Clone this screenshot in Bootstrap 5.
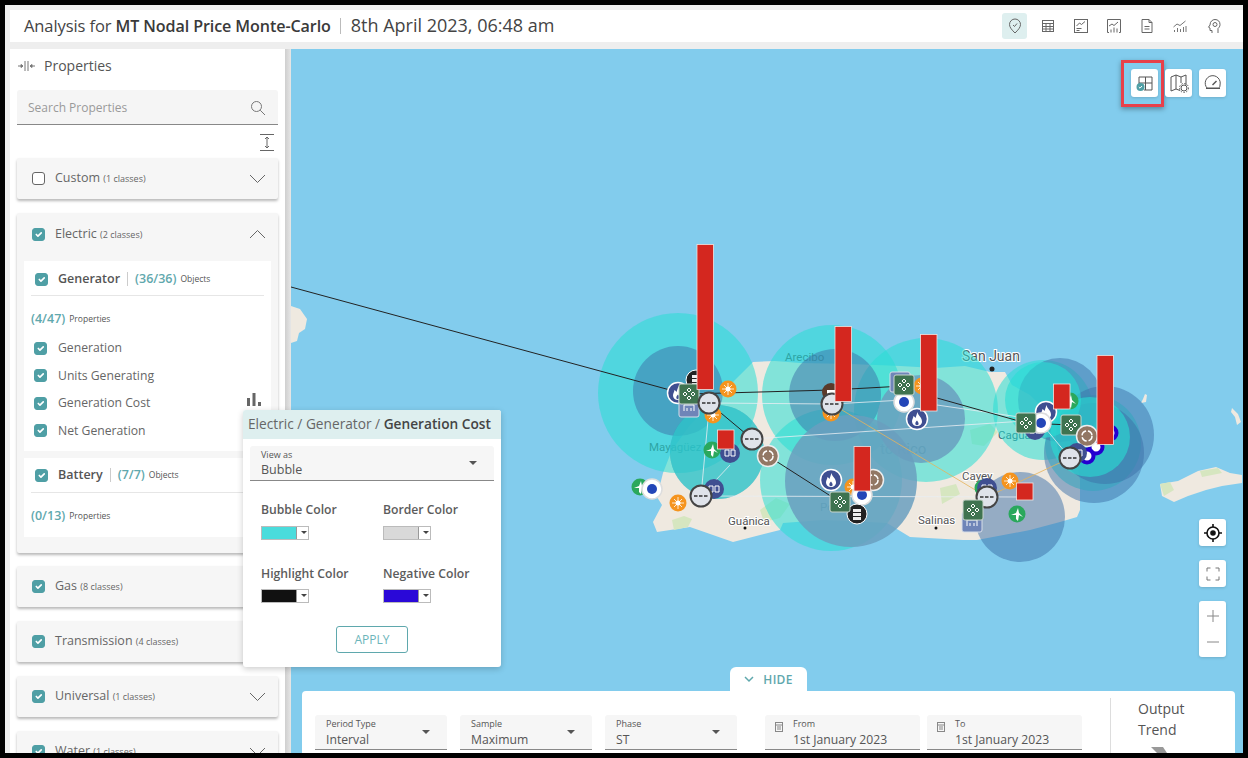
<!DOCTYPE html>
<html lang="en">
<head>
    <meta charset="UTF-8">
    <meta name="viewport" content="width=device-width, initial-scale=1">
    <title>Analysis</title>
    <link rel="stylesheet" href="https://cdn.jsdelivr.net/npm/bootstrap@5.3.0/dist/css/bootstrap.min.css">
    <style>
        html, body { height: 100%; overflow: hidden; }
        body { background: #000; padding: 5px; font-family: "Open Sans", "Liberation Sans", sans-serif; color: #555; }
        .app-frame { width: 1238px; height: 748px; background: #eee; padding: 5px 0 0 5px; overflow: hidden; position: relative; }
        .top-bar { height: 32px; background: #fff; padding: 0 17px 0 14px; margin-bottom: 7px; }
        .top-title { font-size: 16.5px; color: #444; letter-spacing: -.1px; }
        .top-title b { font-weight: 600; color: #3a3a3a; font-size: 16.1px; }
        .top-date { font-size: 18px; letter-spacing: 0; margin-top: -1px; }
        .top-sep { width: 1px; height: 16px; background: #bbb; margin: 0 10px 0 9px; }
        .top-icon { width: 25px; height: 26px; margin-left: 8px; border-radius: 3px; display: flex; align-items: center; justify-content: center; }
        .top-icon.on { background: #deefef; }
        .top-icon.last-one { margin-left: 9px; }
        .work-area { height: 704px; }
        .side-panel { width: 275px; height: 704px; background: #fff; padding: 0 7px; overflow: hidden; flex: none; }
        .side-gutter { width: 6px; flex: none; background: linear-gradient(90deg, #cfcfcf, #e6e6e6); }
        .side-head { height: 41px; padding-top: 7px; font-size: 14px; color: #555; align-items: flex-start; line-height: 20px; }
        .side-head svg { margin-top: 4px; }
        .search-box { height: 35px; background: #f5f5f5; border-bottom: 1px solid #888; border-radius: 3px 3px 0 0; padding: 1px 12px 0 11px; font-size: 12px; color: #9a9a9a; }
        .expand-row { height: 33px; padding: 8px 4px 0 0; }
        .group-card { background: #f6f6f6; border-radius: 2px; box-shadow: 0 2px 3px rgba(0,0,0,.28); margin-bottom: 14px; }
        .group-card.open-one { margin-bottom: 13px; }
        .group-head { height: 41px; padding: 0 12px 0 15px; font-size: 12.5px; color: #666; }
        .group-head.open-head { height: 48px; padding-bottom: 6px; }
        .group-head small { font-size: 9px; color: #666; }
        .count-note { font-size: 8.5px; font-weight: 400; color: #555; margin-left: 4px; }
        .form-check-input.tick { width: 13px; height: 13px; margin: 0 10px 0 0; border-radius: 3px; border-color: #666; flex: none; }
        .form-check-input.tick:checked { background-color: #4f9fa5; border-color: #4f9fa5; }
        .object-box { background: #fff; margin: 0 7px 7px; padding: 0 7px; }
        .object-head { height: 35px; border-bottom: 1px solid #e6e6e6; padding-left: 4px; font-size: 12.5px; font-weight: 600; color: #555; }
        .object-head.first-head { padding-top: 2px; }
        .object-head i { width: 1px; height: 14px; background: #ccc; margin: 0 7px; }
        .teal-num { color: #5fa8ad; font-weight: 600; font-size: 12.5px; }
        .prop-count { height: 38.5px; padding-top: 9px; }
        .prop-count.end-count { height: 44px; padding-top: 2px; }
        .prop-row { height: 27.5px; padding-left: 3px; font-size: 12.2px; color: #666; }
        .prop-row .tick { margin-right: 11px; }
        .row-tail { height: 6.5px; }
        .chart-mini { margin: 0 3px 7px auto; }
        .pop-card { position: absolute; left: 238px; top: 405px; width: 258px; height: 257px; background: #fff; border-radius: 3px; box-shadow: 0 2px 6px rgba(0,0,0,.2); z-index: 5; }
        .pop-title { height: 29px; background: #deefef; padding-left: 5px; font-size: 13.7px; color: #666; border-radius: 3px 3px 0 0; white-space: nowrap; }
        .pop-title b { font-weight: 600; color: #444; }
        .pick-field { background: #f6f6f6; border-bottom: 1px solid #888; border-radius: 3px 3px 0 0; position: relative; padding: 2px 0 0 11px; color: #555; font-size: 12.5px; line-height: 17px; }
        .pick-field label { display: block; font-size: 9px; line-height: 13px; color: #555; }
        .pick-field::after { content: ""; position: absolute; right: 17px; top: 15px; border: 4px solid transparent; border-top: 4.5px solid #555; border-bottom: 0; }
        .pick-field.no-caret::after { display: none; }
        .view-field { margin: 7px 7px 0; height: 35px; }
        .colour-grid { padding: 22px 11px 0 18px; display: grid; grid-template-columns: 122px 1fr; row-gap: 27px; }
        .colour-grid h6 { font-size: 12.2px; font-weight: 600; color: #5c5c5c; margin: 0 0 8px; }
        .swatch-pick { display: flex; width: 48px; height: 14px; border: 1px solid #bbb; }
        .swatch-pick span { width: 34px; }
        .swatch-pick em { flex: 1; background: #fff; position: relative; border-left: 1px solid #999; }
        .swatch-pick em::after { content: ""; position: absolute; left: 3.5px; top: 4px; border: 3px solid transparent; border-top: 3px solid #444; border-bottom: 0; }
        .apply-btn { display: block; width: 72px; height: 27px; margin: 23px auto 0; padding: 0; font-size: 12px; color: #6cb5ba; border: 1px solid #5fa8ad; border-radius: 3px; background: #fff; }
        .map-area { position: relative; overflow: hidden; width: 952px; height: 704px; background: #82cced; }
        .map-area > svg { position: absolute; left: 0; top: 0; }
        .map-btn { position: absolute; width: 27px; background: #fff; border-radius: 3px; display: flex; align-items: center; justify-content: center; box-shadow: 0 1px 3px rgba(0,0,0,.15); }
        .red-mark { position: absolute; left: 830px; top: 11px; width: 43px; height: 47px; border: 3px solid #e8404a; box-shadow: 0 2px 5px rgba(0,0,0,.35); }
        .hide-tab { position: absolute; left: 439px; top: 618px; width: 77px; height: 25px; background: #fff; border-radius: 6px 6px 0 0; font-size: 12px; font-weight: 600; color: #5fa8ad; letter-spacing: .3px; gap: 9px; }
        .filter-panel { position: absolute; left: 11px; top: 642px; width: 933px; height: 80px; background: #fff; border-radius: 4px; padding: 24px 0 0 13px; }
        .filter-panel .pick-field { height: 35px; flex: none; font-size: 12.2px; }
        .filter-panel .pick-field label { margin-bottom: 1px; }
        .filter-sep { position: absolute; left: 808px; top: 7px; width: 1px; height: 60px; background: #ddd; }
        .trend-label { position: absolute; left: 836px; top: 7px; font-size: 14px; line-height: 21px; color: #555; }
        .trend-glyph { position: absolute; left: 849px; top: 56px; }
        .date-field { padding-left: 28px; }
        .date-field svg { position: absolute; left: 10px; top: 6px; }
        .map-label { font-family: Roboto, "Liberation Sans", sans-serif; fill: #555; stroke: #fff; stroke-width: 2px; paint-order: stroke; font-size: 11.5px; }
        .map-label.under { fill: #33606c; stroke: none; }
    </style>
</head>
<body>
<div class="app-frame">
    <!-- Title bar -->
    <div class="top-bar d-flex align-items-center">
        <span class="top-title">Analysis for <b>MT Nodal Price Monte-Carlo</b></span>
        <span class="top-sep"></span>
        <span class="top-title top-date">8th April 2023, 06:48 am</span>
        <div class="ms-auto d-flex align-items-center">
            <span class="top-icon on"><svg width="16" height="16" viewBox="0 0 16 16" fill="none" stroke="#666"><path d="M8 15C5 12 2.500 9.500 2.500 6.500a5.500 5.500 0 0 1 11 0C13.500 9.500 11 12 8 15z"/><path d="M6 7l1.500 1.500L10 5.500"/></svg></span>
            <span class="top-icon"><svg width="16" height="16" viewBox="0 0 16 16" fill="none" stroke="#666"><rect x="2.500" y="2.500" width="11" height="11"/><path d="M2.500 5.500h11M2.500 8.500h11M2.500 11h11M6 5.500v8M10 5.500v8"/></svg></span>
            <span class="top-icon"><svg width="16" height="16" viewBox="0 0 16 16" fill="none" stroke="#666"><rect x="1.500" y="1.500" width="13" height="13"/><path d="M3.500 8l3-3 2 1.500 3.500-3M3.500 10.500h5M3.500 12.500h3"/></svg></span>
            <span class="top-icon"><svg width="16" height="16" viewBox="0 0 16 16" fill="none" stroke="#666"><path d="M3 14.500H1.500v-13h13v13H13M3 8l3-2 2 1.500 4-3.500"/><path d="M5 14.500v-3M8 14.500v-5M11 14.500v-4"/></svg></span>
            <span class="top-icon"><svg width="16" height="16" viewBox="0 0 16 16" fill="none" stroke="#666"><path d="M3 1.500h7l3 3v10H3zM10 1.500v3h3M5.500 8.500h5M5.500 11h5"/></svg></span>
            <span class="top-icon"><svg width="16" height="16" viewBox="0 0 16 16" fill="none" stroke="#777"><path d="M1.500 9L5 6l3 1.500L13.500 3"/><path d="M2.500 14v-2M5.500 14v-4M8.500 14v-3M11.500 14V9M14 14V8"/></svg></span>
            <span class="top-icon last-one"><svg width="16" height="16" viewBox="0 0 16 16" fill="none" stroke="#666"><path d="M6 15v-2.500H4V10L2.500 9.200 4 7C4 3.500 6.500 1.500 9 1.500c3 0 5 2 5 5 0 2-1 3-2 4V15"/><circle cx="9" cy="6.500" r="2"/></svg></span>
        </div>
    </div>

    <div class="work-area d-flex">
        <!-- Properties -->
        <div class="side-panel">
            <div class="side-head d-flex gap-2">
                <svg width="19" height="12" viewBox="0 0 19 12" fill="none" stroke="#777" stroke-width="1"><path d="M8 1v10M11 1v10M1 6h4M18 6h-4"/><path d="M4 4.500L6 6 4 7.500zM15 4.500L13 6l2 1.500z" fill="#777"/></svg>
                <span>Properties</span>
            </div>
            <div class="search-box d-flex align-items-center justify-content-between">
                <span>Search Properties</span>
                <svg width="16" height="16" viewBox="0 0 16 16" fill="none" stroke="#777"><circle cx="6.500" cy="6.500" r="5"/><path d="M10.200 10.200L15 15"/></svg>
            </div>
            <div class="expand-row d-flex justify-content-end">
                <svg width="14" height="19" viewBox="0 0 14 19" fill="none" stroke="#666"><path d="M0 1.500h14M0 17.500h14M7 4v11M5 6l2-2 2 2M5 13l2 2 2-2"/></svg>
            </div>

            <div class="group-card">
                <div class="group-head d-flex align-items-center">
                    <input class="form-check-input tick" type="checkbox">
                    <span>Custom <small>(1 classes)</small></span>
                    <svg class="ms-auto" width="17" height="10" viewBox="0 0 17 10" fill="none" stroke="#666"><path d="M1 1l7.500 7.500L16 1"/></svg>
                </div>
            </div>

            <div class="group-card open-one pb-1">
                <div class="group-head open-head d-flex align-items-center">
                    <input class="form-check-input tick" type="checkbox" checked>
                    <span>Electric <small>(2 classes)</small></span>
                    <svg class="ms-auto" width="17" height="10" viewBox="0 0 17 10" fill="none" stroke="#666"><path d="M1 9l7.500-7.500L16 9"/></svg>
                </div>
                <div class="object-box">
                    <div class="object-head first-head d-flex align-items-center">
                        <input class="form-check-input tick" type="checkbox" checked>
                        <span>Generator</span><i></i><span class="teal-num">(36/36)</span><span class="count-note">Objects</span>
                    </div>
                    <div class="prop-count d-flex align-items-center"><span class="teal-num">(4/47)</span><span class="count-note">Properties</span></div>
                    <div class="prop-row d-flex align-items-center"><input class="form-check-input tick" type="checkbox" checked><span>Generation</span></div>
                    <div class="prop-row d-flex align-items-center"><input class="form-check-input tick" type="checkbox" checked><span>Units Generating</span></div>
                    <div class="prop-row d-flex align-items-center"><input class="form-check-input tick" type="checkbox" checked><span>Generation Cost</span>
                        <svg class="chart-mini" width="14" height="13" viewBox="0 0 14 13" fill="#666"><rect x="0" y="5" width="3" height="8"/><rect x="5.500" y="0" width="3" height="13"/><rect x="11" y="9" width="3" height="4"/></svg>
                    </div>
                    <div class="prop-row d-flex align-items-center"><input class="form-check-input tick" type="checkbox" checked><span>Net Generation</span></div>
                    <div class="row-tail"></div>
                </div>
                <div class="object-box mb-0 pb-0">
                    <div class="object-head d-flex align-items-center">
                        <input class="form-check-input tick" type="checkbox" checked>
                        <span>Battery</span><i></i><span class="teal-num">(7/7)</span><span class="count-note">Objects</span>
                    </div>
                    <div class="prop-count end-count d-flex align-items-center"><span class="teal-num">(0/13)</span><span class="count-note">Properties</span></div>
                </div>
                <div class="pt-2 pb-1"></div>
            </div>

            <div class="group-card">
                <div class="group-head d-flex align-items-center"><input class="form-check-input tick" type="checkbox" checked><span>Gas <small>(8 classes)</small></span></div>
            </div>
            <div class="group-card">
                <div class="group-head d-flex align-items-center"><input class="form-check-input tick" type="checkbox" checked><span>Transmission <small>(4 classes)</small></span></div>
            </div>
            <div class="group-card">
                <div class="group-head d-flex align-items-center">
                    <input class="form-check-input tick" type="checkbox" checked>
                    <span>Universal <small>(1 classes)</small></span>
                    <svg class="ms-auto" width="17" height="10" viewBox="0 0 17 10" fill="none" stroke="#666"><path d="M1 1l7.500 7.500L16 1"/></svg>
                </div>
            </div>
            <div class="group-card">
                <div class="group-head d-flex align-items-center">
                    <input class="form-check-input tick" type="checkbox" checked>
                    <span>Water <small>(1 classes)</small></span>
                    <svg class="ms-auto" width="17" height="10" viewBox="0 0 17 10" fill="none" stroke="#666"><path d="M1 1l7.500 7.500L16 1"/></svg>
                </div>
            </div>
        </div>
        <div class="side-gutter"></div>

        <!-- Map -->
        <div class="map-area">
            <svg width="952" height="704" viewBox="291 49 952 704">
                <defs>
                    <g id="m-grid"><rect x="-10" y="-10" width="20" height="20" rx="2" fill="#3f7350" stroke="#c9d6cc"/><path d="M0-6l2 2-2 2-2-2zM0 2l2 2-2 2-2-2zM-6 0l2-2 2 2-2 2zM2 0l2-2 2 2-2 2z" fill="none" stroke="#fff"/></g>
                    <g id="m-break"><circle r="10.500" fill="#dfe3ea" stroke="#444" stroke-width="2"/><path d="M-7 0h14" stroke="#333" stroke-width="1.500" stroke-dasharray="3.500 1.500"/></g>
                    <g id="m-sun"><circle r="8.500" fill="#f5941e"/><circle r="2.500" fill="#fff"/><path d="M0-6V6M-6 0H6M-4-4L4 4M-4 4L4-4" stroke="#fff" stroke-width=".8"/></g>
                    <g id="m-flame"><circle r="10.500" fill="#3f4f91" stroke="#fff" stroke-width="1.500"/><path d="M.5-7C1-3 5-2 5 2.500 5 5 3 7 0 7S-5 5-5 2.500C-5 .5-4-.5-3.500-3-2.500-2.500-2-1.500-1.500-1-1-3 0-5 .5-7zM0 1.500C-1.500 3-2 4-1.500 5.500-.5 6.500.5 6.500 1.500 5.500 2 4 1 3 0 1.500z" fill="#fff" fill-rule="evenodd"/></g>
                    <g id="m-plane"><circle r="8.500" fill="#2aa85c"/><path d="M1-6L-1-1-6 1-1 1-1 5 1 7 2 1 6 3 2-1z" fill="#fff"/></g>
                    <g id="m-dot"><circle r="10" fill="#fff" stroke="#ddd" stroke-width="1.500"/><circle r="5" fill="#2346b8"/></g>
                    <g id="m-store"><circle r="10" fill="#222" stroke="#fff"/><path d="M-4-5h8v3h-8zM-4-1h8v3h-8zM-4 3h8v3h-8z" fill="#eee"/></g>
                    <g id="m-recycle"><circle r="10.500" fill="#927764" stroke="#eee" stroke-width="1.500"/><circle r="5" fill="none" stroke="#fff" stroke-width="1.500" stroke-dasharray="6 2"/></g>
                    <g id="m-batt"><circle r="10" fill="#3f4f91"/><path d="M-5-3h4v6h-4zM1-3h4v6H1z" fill="none" stroke="#fff"/></g>
                    <g id="m-coal"><circle r="9" fill="#5a3a2a"/><path d="M-4-2h8v4h-8z" fill="#fff"/></g>
                    <g id="m-plant"><rect x="-10" y="-10" width="20" height="20" rx="2" fill="#6f85b8" stroke="#d8dee9"/><path d="M-5 4v-6h10v6M-2 4v-3M2 4v-3" stroke="#fff" fill="none"/></g>
                    <g id="m-neg"><circle r="6.500" fill="#fff" stroke="#2400d0" stroke-width="4"/></g>
                </defs>

                <!-- land -->
                <g fill="#efe9e0">
                    <path d="M291 306l9 3 7 10-2 10-6 4-2 8-6 2z"/>
                    <path d="M663 473L672 450 690 425 715 400 740 375 753 362 775 361 800 363 850 364 900 366 935 368 965 366 990 372 1005 372 1012 385 1030 395 1055 420 1075 450 1080 480 1080 510 1077 517 1060 522 1030 530 977 540 963 540 910 537 887 523 850 521 823 520 783 523 780 530 733 542 690 527 657 532 653 522 662 505 657 497z"/>
                    <path d="M1160 484l18-3 20-10 18-4 14 6 12 2v8l-20 3-16 4-18 6-14 6-12-6z"/>
                    <path d="M1143 399l2-5 2 1-1 7-5 1zM1232 408l6 6 3 8-4 3-2-8-4-5z"/>
                </g>
                <g fill="#d6e6c0">
                    <path d="M672 520l12-4 8 3-4 8-14 3zM1160 484l10-2 4 8-10 6zM1200 471l18-3 4 5-20 4zM970 430l20-6 8 8-14 14-12-2zM760 510l16-12 14 6-10 14-16 4zM940 488l16-4 4 10-18 10z"/>
                </g>
                <g fill="#555">
                    <circle cx="992" cy="369" r="2.500" fill="#222"/><circle cx="745" cy="528" r="1.500" fill="#111"/><circle cx="936" cy="528" r="1.500" fill="#111"/>
                </g>
                <text class="map-label" x="962" y="361" style="font-size:14px">San Juan</text>
                <text class="map-label" x="728" y="525">Guánica</text>
                <text class="map-label" x="918" y="524">Salinas</text>
                <text class="map-label" x="962" y="480">Cayey</text>
                <text class="map-label under" x="785" y="361">Arecibo</text>
                <text class="map-label under" x="649" y="451">Mayagüez</text>
                <text class="map-label under" x="880" y="454" style="font-size:15px">to Rico</text>
                <text class="map-label under" x="998" y="439">Caguas</text>
                <text class="map-label under" x="820" y="511">Ponce</text>

                <!-- bubbles -->
                <g fill="#28ded4" fill-opacity=".55">
                    <circle cx="678" cy="393" r="80"/><circle cx="832" cy="395" r="70"/><circle cx="831" cy="480" r="71"/>
                    <circle cx="926" cy="410" r="72"/><circle cx="1043" cy="410" r="50"/><circle cx="1093" cy="443" r="48"/>
                </g>
                <g fill="#3c6fa8" fill-opacity=".5">
                    <circle cx="678" cy="391" r="45"/><circle cx="717" cy="452" r="47"/><circle cx="835" cy="395" r="46"/>
                    <circle cx="1060" cy="400" r="42"/>
                    <circle cx="1094" cy="453" r="50"/><circle cx="1105" cy="435" r="49"/><circle cx="1020" cy="517" r="45"/>
                </g>
                <g fill="#6a9fbe" fill-opacity=".85">
                    <circle cx="851" cy="481" r="66"/><circle cx="921" cy="419" r="44"/>
                </g>
                <g fill="#28ded4" fill-opacity=".6">
                    <circle cx="717" cy="452" r="47"/><circle cx="1090" cy="437" r="40"/><circle cx="1043" cy="400" r="38"/>
                </g>

                <!-- network lines -->
                <g fill="none" stroke="#e8eef2" stroke-opacity=".8" stroke-width="1">
                    <path d="M709 403L832 404 904 400M752 439L1040 420M701 496L1020 497M708 420L701 496M730 465L701 496M1041 423L1070 458M937 405L1026 418"/>
                </g>
                <g fill="none" stroke="#e6b45a" stroke-width=".8">
                    <path d="M832 404L987 497 1070 458"/>
                </g>
                <g fill="none" stroke="#222" stroke-width="1">
                    <path d="M291 287L670 390M689 394L831 390 904 386M709 403L752 439M768 456L840 502M937 398L1026 423 1071 425"/>
                </g>

                <!-- markers -->
                <use href="#m-store" x="696" y="380"/><use href="#m-flame" x="678" y="393"/><use href="#m-plant" x="689" y="407"/>
                <use href="#m-grid" x="689" y="394"/><use href="#m-sun" x="728" y="389"/><use href="#m-sun" x="713" y="415"/>
                <use href="#m-break" x="709" y="403"/><use href="#m-batt" x="730" y="453"/><use href="#m-plane" x="712" y="450"/>
                <use href="#m-break" x="752" y="439"/><use href="#m-recycle" x="768" y="456"/><use href="#m-batt" x="714" y="489"/>
                <use href="#m-break" x="701" y="496"/><use href="#m-sun" x="678" y="503"/><use href="#m-plane" x="640" y="487"/>
                <use href="#m-dot" x="652" y="489"/>
                <use href="#m-coal" x="831" y="392"/><use href="#m-sun" x="831" y="413"/><use href="#m-break" x="832" y="404"/>
                <use href="#m-flame" x="831" y="480"/><use href="#m-sun" x="853" y="487"/><use href="#m-recycle" x="873" y="480"/>
                <use href="#m-dot" x="862" y="495"/><use href="#m-store" x="857" y="514"/><use href="#m-grid" x="840" y="502"/>
                <use href="#m-plant" x="900" y="382"/><use href="#m-sun" x="922" y="386"/><use href="#m-dot" x="904" y="402"/>
                <use href="#m-grid" x="904" y="385"/><use href="#m-flame" x="917" y="419"/>
                <use href="#m-plane" x="1070" y="401"/><use href="#m-flame" x="1046" y="412"/><use href="#m-batt" x="1035" y="430"/>
                <use href="#m-dot" x="1041" y="423"/><use href="#m-grid" x="1026" y="423"/><use href="#m-grid" x="1071" y="425"/>
                <use href="#m-neg" x="1110" y="433"/><use href="#m-neg" x="1096" y="447"/><use href="#m-neg" x="1087" y="456"/>
                <use href="#m-recycle" x="1087" y="436"/><use href="#m-batt" x="1077" y="453"/><use href="#m-break" x="1070" y="458"/>
                <use href="#m-sun" x="1010" y="481"/><use href="#m-plane" x="983" y="488"/><use href="#m-batt" x="987" y="488"/>
                <use href="#m-break" x="987" y="497"/><use href="#m-plant" x="972" y="522"/><use href="#m-grid" x="973" y="510"/>
                <use href="#m-plane" x="1017" y="514"/>

                <!-- bars -->
                <g fill="#d4271f" stroke="#f1e4e0" stroke-width=".8">
                    <rect x="697" y="244.500" width="16.500" height="145"/><rect x="835" y="326.500" width="16.500" height="75"/>
                    <rect x="920.500" y="334.500" width="16.500" height="76.500"/><rect x="854" y="446.500" width="16.500" height="44.500"/>
                    <rect x="717.500" y="430" width="16.500" height="19"/><rect x="1053.500" y="384" width="16.500" height="25"/>
                    <rect x="1097" y="355.500" width="16.500" height="89"/><rect x="1016.500" y="483" width="16.500" height="17"/>
                </g>
            </svg>

            <!-- Map tools -->
            <span class="red-mark"></span>
            <span class="map-btn" style="left:840px;top:20px;height:28px"><svg width="18" height="18" viewBox="0 0 18 18" fill="none" stroke="#555"><path d="M3 10V3h13v13H8M3 9h13M9.500 3v13"/><circle cx="4.500" cy="13" r="4" fill="#4f9fa5" stroke="none"/><path d="M2.800 13l1.200 1.200 2-2.200" stroke="#fff"/></svg></span>
            <span class="map-btn" style="left:874px;top:20px;height:28px"><svg width="20" height="20" viewBox="0 0 20 20" fill="none" stroke="#555"><path d="M2 4l5-2 5 2 5-2v10M12 4v6M7 2v14M2 4v14l5-2 4 1.500"/><circle cx="15" cy="15" r="3"/><circle cx="15" cy="15" r="4.500" stroke-dasharray="1.500 1.500"/></svg></span>
            <span class="map-btn" style="left:908px;top:20px;height:28px"><svg width="18" height="16" viewBox="0 0 18 16" fill="none" stroke="#555"><path d="M3 13A7.500 7.500 0 1 1 16 10c0 1.500-.3 2.300-1 3zM2 13.500h14"/><path d="M8.500 10l4-4" stroke-width="1.500"/></svg></span>
            <span class="map-btn" style="left:908px;top:470px;height:27px"><svg width="20" height="20" viewBox="0 0 20 20" fill="none" stroke="#111" stroke-width="1.600"><circle cx="10" cy="10" r="6"/><circle cx="10" cy="10" r="2" fill="#111"/><path d="M10 1v3M10 16v3M1 10h3M16 10h3"/></svg></span>
            <span class="map-btn" style="left:908px;top:511px;height:27px"><svg width="14" height="14" viewBox="0 0 14 14" fill="none" stroke="#777"><path d="M1 4.500V1h3.500M9.500 1H13v3.500M13 9.500V13H9.500M4.500 13H1V9.500"/></svg></span>
            <span class="map-btn flex-column" style="left:908px;top:552px;height:56px"><svg width="14" height="26" viewBox="0 0 14 26" fill="none" stroke="#888"><path d="M1 13h12M7 7v12"/></svg><svg width="14" height="26" viewBox="0 0 14 26" fill="none" stroke="#888"><path d="M1 13h12"/></svg></span>

            <div class="hide-tab d-flex align-items-center justify-content-center">
                <svg width="10" height="7" viewBox="0 0 10 7" fill="none" stroke="#5fa8ad" stroke-width="1.500"><path d="M1 1l4 4 4-4"/></svg><span>HIDE</span>
            </div>
            <div class="filter-panel d-flex">
                <div class="pick-field" style="width:132px;margin-right:13px"><label>Period Type</label>Interval</div>
                <div class="pick-field" style="width:132px;margin-right:13px"><label>Sample</label>Maximum</div>
                <div class="pick-field" style="width:132px;margin-right:28px"><label>Phase</label>ST</div>
                <div class="pick-field no-caret date-field" style="width:155px;margin-right:7px">
                    <svg width="8" height="11" viewBox="0 0 8 11" fill="none" stroke="#888"><rect x=".5" y="1.500" width="7" height="9"/><path d="M.5 4h7M2 6h4M2 8h4"/></svg>
                    <label>From</label>1st January 2023
                </div>
                <div class="pick-field no-caret date-field" style="width:155px">
                    <svg width="8" height="11" viewBox="0 0 8 11" fill="none" stroke="#888"><rect x=".5" y="1.500" width="7" height="9"/><path d="M.5 4h7M2 6h4M2 8h4"/></svg>
                    <label>To</label>1st January 2023
                </div>
                <span class="filter-sep"></span>
                <div class="trend-label">Output<br>Trend</div>
                <svg class="trend-glyph" width="16" height="6" viewBox="0 0 16 6" fill="#999"><path d="M0 0h12l4 6H6z"/></svg>
            </div>
        </div>
    </div>

    <!-- Colour settings popover -->
    <div class="pop-card">
        <div class="pop-title d-flex align-items-center"><span>Electric / Generator / <b>Generation Cost</b></span></div>
        <div class="pick-field view-field"><label>View as</label>Bubble</div>
        <div class="colour-grid">
            <div><h6>Bubble Color</h6><div class="swatch-pick"><span style="background:#4adcdc"></span><em></em></div></div>
            <div><h6>Border Color</h6><div class="swatch-pick"><span style="background:#d9d9d9"></span><em></em></div></div>
            <div><h6>Highlight Color</h6><div class="swatch-pick"><span style="background:#111"></span><em></em></div></div>
            <div><h6>Negative Color</h6><div class="swatch-pick"><span style="background:#2a08d8"></span><em></em></div></div>
        </div>
        <button type="button" class="btn apply-btn">APPLY</button>
    </div>
</div>
<script src="https://cdn.jsdelivr.net/npm/bootstrap@5.3.0/dist/js/bootstrap.bundle.min.js"></script>
</body>
</html>
